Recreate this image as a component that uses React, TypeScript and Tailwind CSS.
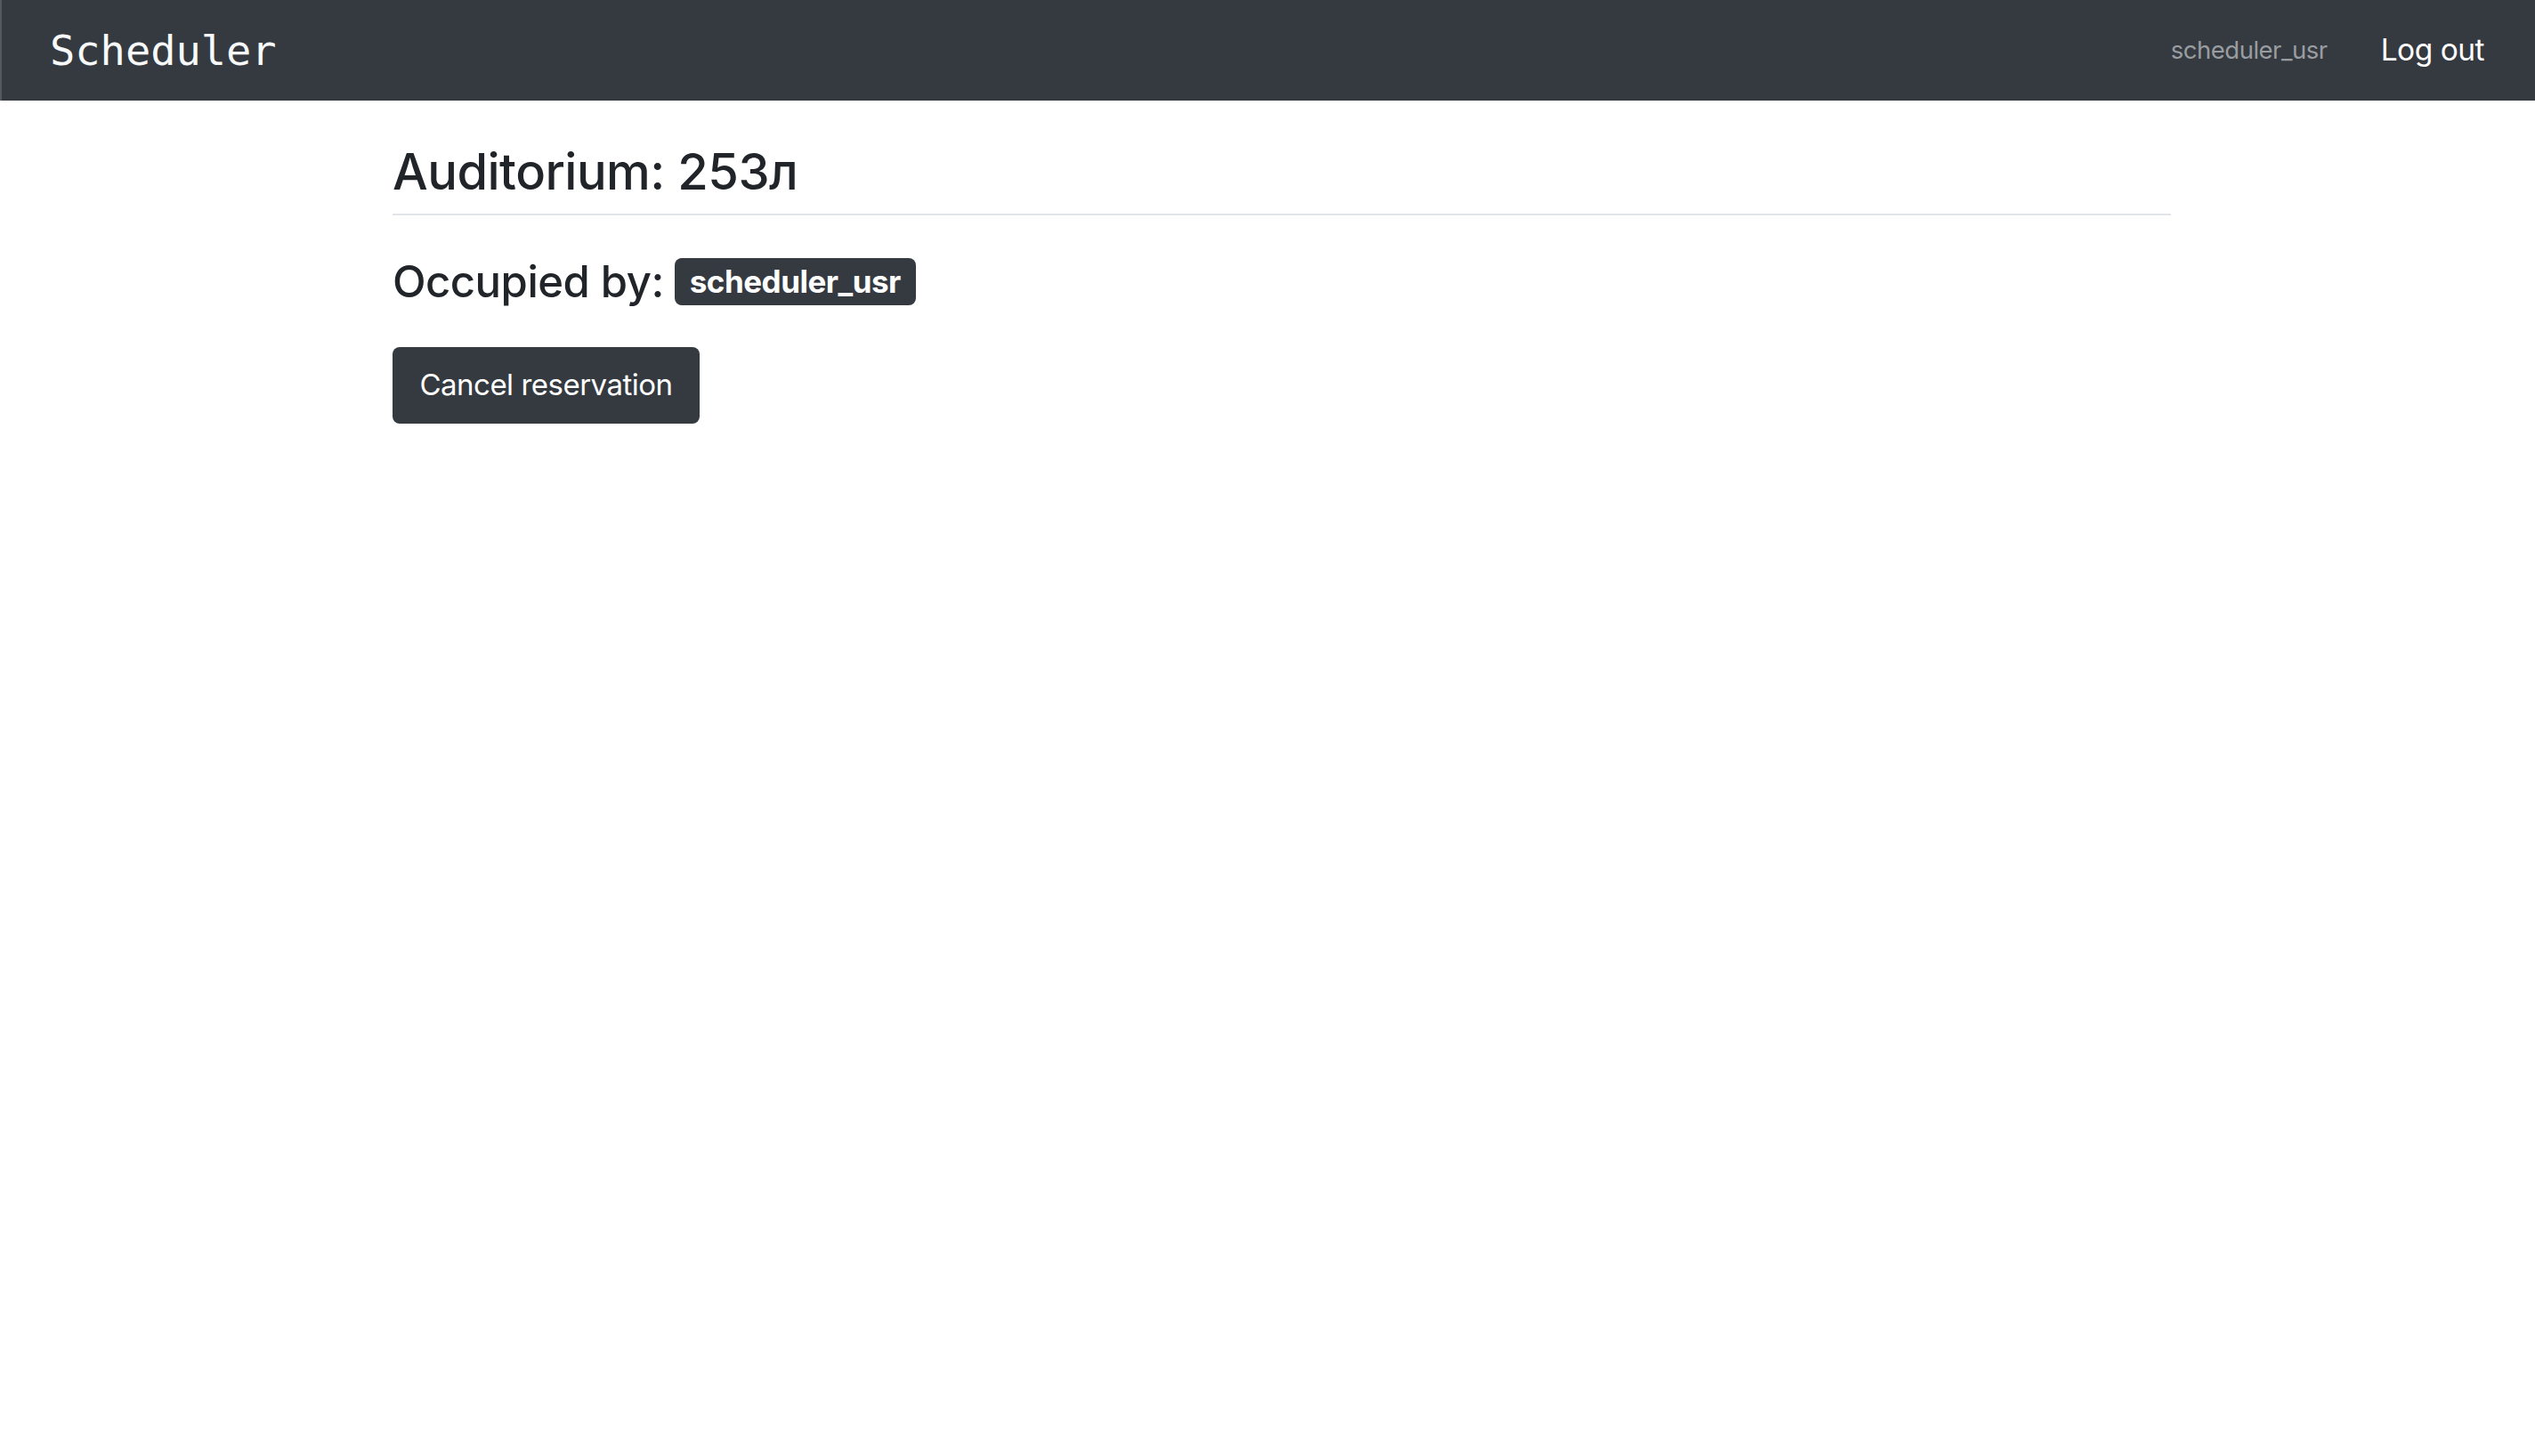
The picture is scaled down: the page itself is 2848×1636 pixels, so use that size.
export default function App() {
	return (
		<div className="min-h-screen bg-white font-['Inter','Liberation_Sans',Arial,sans-serif] text-[#212529]">
			<nav className="flex h-[113px] items-center justify-between border-l-2 border-[#55595e] bg-[#343a40] pl-[54px] pr-[57px]">
				<a className="font-['DejaVu_Sans_Mono',monospace] text-[47px] leading-none text-[#f8f9fa]">
					Scheduler
				</a>
				<div className="flex items-center gap-[60px]">
					<span className="text-[27.5px] tracking-[-0.5px] text-[#9a9da0]">scheduler_usr</span>
					<a className="text-[33.5px] tracking-[-0.5px] text-white">Log out</a>
				</div>
			</nav>
			<main className="w-[2439px] pl-[441px]">
				<h2 className="mt-[44px] text-[56px] font-medium leading-[72px] tracking-[-0.5px]">
					Auditorium: 253л
				</h2>
				<hr className="mt-[11px] border-t-2 border-[#e1e4e8]" />
				<div className="mt-[43px] flex h-[62px] items-center">
					<h4 className="text-[49px] font-medium leading-none tracking-[-0.5px]">Occupied by:</h4>
					<span className="ml-[12px] flex h-[53px] w-[271px] items-center justify-center rounded-lg bg-[#343a40] text-[35px] font-bold tracking-[-0.5px] text-white">
						scheduler_usr
					</span>
				</div>
				<button className="mt-[43px] h-[86px] w-[345px] rounded-lg bg-[#343a40] text-[33px] tracking-[-0.5px] text-white">
					Cancel reservation
				</button>
			</main>
		</div>
	);
}
